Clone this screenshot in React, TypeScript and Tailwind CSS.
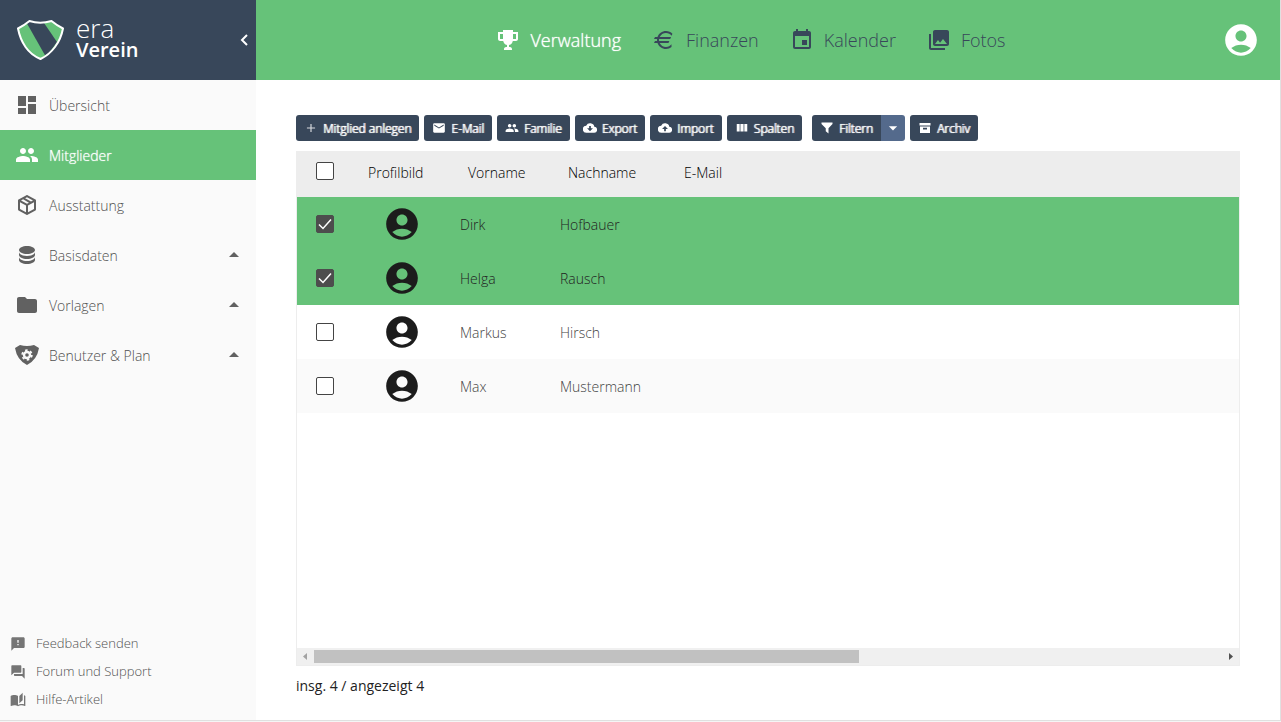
import { useState } from "react";
import type { ReactNode } from "react";
import {
  MdAccountCircle,
  MdAdd,
  MdArrowDropDown,
  MdArrowDropUp,
  MdAutoStories,
  MdDashboard,
  MdEmail,
  MdEvent,
  MdFeedback,
  MdFolder,
  MdForum,
  MdPeople,
  MdPhotoLibrary,
} from "react-icons/md";

function Glyph({ d, className }: { d: string; className: string }) {
  return (
    <svg viewBox="0 0 24 24" fill="currentColor" fillRule="evenodd" className={className} aria-hidden="true">
      <path d={d} />
    </svg>
  );
}

const TROPHY =
  "M20.2,4H20H17V2H7V4H4.5H3.8H2V11C2,12 3,13 4,13H7.2C7.6,14.9 8.6,16.6 11,16.9V19C8,19.2 8,20.3 8,21.6V22H16V21.7C16,20.4 16,19.3 13,19.1V17C15.5,16.7 16.5,15 16.8,13.1H20C21,13.1 22,12.1 22,11.1V4H20.2M4,11V6H7V8V11C5.6,11 4.4,11 4,11M20,11C19.6,11 18.4,11 17,11V6H18H20V11Z";
const EURO =
  "M7.07,11L7,12L7.07,13H17.35L16.5,15H7.67C8.8,17.36 11.21,19 14,19C16.23,19 18.22,17.96 19.5,16.33V19.12C18,20.3 16.07,21 14,21C10.08,21 6.75,18.5 5.5,15H2L3,13H5.05L5,12L5.05,11H2L3,9H5.5C6.75,5.5 10.08,3 14,3C16.5,3 18.8,4.04 20.43,5.71L19.57,7.75C18.29,6.08 16.27,5 14,5C11.21,5 8.8,6.64 7.67,9H19.04L18.19,11H7.07Z";
const DATABASE =
  "M12,3C7.58,3 4,4.79 4,7C4,9.21 7.58,11 12,11C16.42,11 20,9.21 20,7C20,4.79 16.42,3 12,3M4,9V12C4,14.21 7.58,16 12,16C16.42,16 20,14.21 20,12V9C20,11.21 16.42,13 12,13C7.58,13 4,11.21 4,9M4,14V17C4,19.21 7.58,21 12,21C16.42,21 20,19.21 20,17V14C20,16.21 16.42,18 12,18C7.58,18 4,16.21 4,14Z";
const PACKAGE =
  "M21,16.5C21,16.88 20.79,17.21 20.47,17.38L12.57,21.82C12.41,21.94 12.21,22 12,22C11.79,22 11.59,21.94 11.43,21.82L3.53,17.38C3.21,17.21 3,16.88 3,16.5V7.5C3,7.12 3.21,6.79 3.53,6.62L11.43,2.18C11.59,2.06 11.79,2 12,2C12.21,2 12.41,2.06 12.57,2.18L20.47,6.62C20.79,6.79 21,7.12 21,7.5V16.5M12,4.15L10.11,5.22L16,8.61L17.96,7.5L12,4.15M6.04,7.5L12,10.85L13.96,9.75L8.08,6.35L6.04,7.5M5,15.91L11,19.29V12.58L5,9.21V15.91M19,15.91V9.21L13,12.58V19.29L19,15.91Z";
const CLOUD = "M19.4 10A7.5 7.5 0 0 0 5.4 8 6 6 0 0 0 6 20H19a5 5 0 0 0 .4-10Z";
const CLOUD_DOWN = CLOUD + "M10.5 8.5H13.5V12.5H17L12 17.5 7 12.5H10.5Z";
const CLOUD_UP = CLOUD + "M10.5 17.5H13.5V13.5H17L12 8.500 7 13.5H10.5Z";
const COLUMNS = "M3 5H8V18H3ZM9.3 5H14.7V18H9.3ZM16 5H21V18H16Z";
const FUNNEL = "M1 1H23V4L15 12.5V23L9.5 18.5V12.5L1 4Z";
const ARCHIVE = "M1 2H23V7H1ZM2 9H22V22H2ZM8 11.5V15H16V11.5Z";

function Logo() {
  return (
    <svg viewBox="0 0 48 44" className="h-11 w-12" aria-hidden="true">
      <defs>
        <clipPath id="shield">
          <path d="M2 10 14 3Q24 7 34 3L47 10Q44 30 24 41 5 31 2 10Z" />
        </clipPath>
      </defs>
      <g clipPath="url(#shield)">
        <path d="M0 0H48V44H0Z" fill="#66c279" />
        <path d="M9 2H26L41 24 30 39Z" fill="#38475a" />
      </g>
      <path
        d="M2 10.500Q8 7.500 13.500 3Q24 6.500 35.500 3 41 7.500 47 10.500Q45 21 39 29T24.500 41Q15 37 9.500 29T2 10.500Z"
        fill="none"
        stroke="#fff"
        strokeWidth="2"
        strokeLinejoin="round"
      />
    </svg>
  );
}

function ShieldGear() {
  return (
    <svg viewBox="0 0 24 24" className="size-6" aria-hidden="true">
      <path d="M0 5 5 2Q12 4 19 2L24 5Q22 17 12 22 2 17 0 5Z" fill="#616161" />
      <circle cx="12" cy="12" r="3" fill="none" stroke="#fafafa" strokeWidth="2.400" />
      <circle cx="12" cy="12" r="4.800" fill="none" stroke="#fafafa" strokeWidth="1.800" strokeDasharray="2.500 2.526" />
    </svg>
  );
}

const topNav: { label: string; icon: ReactNode; active?: boolean }[] = [
  { label: "Verwaltung", icon: <Glyph d={TROPHY} className="size-6" />, active: true },
  { label: "Finanzen", icon: <Glyph d={EURO} className="size-6" /> },
  { label: "Kalender", icon: <MdEvent className="size-6" /> },
  { label: "Fotos", icon: <MdPhotoLibrary className="size-6" /> },
];

const sideNav: { label: string; icon: ReactNode; active?: boolean; group?: boolean }[] = [
  { label: "Übersicht", icon: <MdDashboard className="size-6" /> },
  { label: "Mitglieder", icon: <MdPeople className="size-6" />, active: true },
  { label: "Ausstattung", icon: <Glyph d={PACKAGE} className="size-6" /> },
  { label: "Basisdaten", icon: <Glyph d={DATABASE} className="size-6" />, group: true },
  { label: "Vorlagen", icon: <MdFolder className="size-6" />, group: true },
  { label: "Benutzer & Plan", icon: <ShieldGear />, group: true },
];

const helpNav = [
  { label: "Feedback senden", icon: <MdFeedback className="size-4" /> },
  { label: "Forum und Support", icon: <MdForum className="size-4" /> },
  { label: "Hilfe-Artikel", icon: <MdAutoStories className="size-4" /> },
];

const initialMembers = [
  { first: "Dirk", last: "Hofbauer", selected: true },
  { first: "Helga", last: "Rausch", selected: true },
  { first: "Markus", last: "Hirsch", selected: false },
  { first: "Max", last: "Mustermann", selected: false },
];

function ToolButton({ icon, label, joined }: { icon: ReactNode; label: string; joined?: boolean }) {
  return (
    <button
      type="button"
      className={
        "flex h-[26px] items-center gap-[5px] bg-[#38475a] px-2 text-xs font-light text-white " +
        (joined ? "rounded-l-[3px]" : "rounded-[3px]")
      }
    >
      {icon}
      <span className="pt-0.5 whitespace-nowrap [text-shadow:1px_0_0_#fff,0_0_1px_#fff]">{label}</span>
    </button>
  );
}

function Check({ checked, onChange, label }: { checked: boolean; onChange: () => void; label: string }) {
  return (
    <label className="mx-auto grid size-[18px] place-items-center">
      <input
        type="checkbox"
        aria-label={label}
        checked={checked}
        onChange={onChange}
        className="col-start-1 row-start-1 size-[18px] appearance-none rounded-xs border border-[#444] bg-white checked:border-[#4d4d4d] checked:bg-[#4d4d4d]"
      />
      {checked && (
        <svg viewBox="0 0 18 18" className="pointer-events-none col-start-1 row-start-1 size-[18px]" aria-hidden="true">
          <path d="M3 9.500 7 13.500 15 4.500" fill="none" stroke="#fff" strokeWidth="1.500" />
        </svg>
      )}
    </label>
  );
}

export default function App() {
  const [members, setMembers] = useState(initialMembers);
  const all = members.every((m) => m.selected);
  const toggle = (index: number) =>
    setMembers(members.map((m, i) => (i === index ? { ...m, selected: !m.selected } : m)));

  return (
    <div className="flex min-h-screen flex-col bg-[#f5f5f5] pb-px font-['Open_Sans',sans-serif]">
      <div className="flex grow border-r border-b border-[#e0e0e0] bg-white">
        <aside className="flex w-64 shrink-0 flex-col bg-[#fafafa]">
          <div className="flex h-20 items-center bg-[#38475a] pr-1 pl-4 text-white">
            <Logo />
            <div className="grow pb-1 pl-3">
              <div className="text-[26px] leading-6 font-light">era</div>
              <div className="text-xl leading-5 font-semibold">Verein</div>
            </div>
            <button type="button" aria-label="Menü einklappen" className="p-1">
              <svg viewBox="0 0 8 14" className="h-3.5 w-2" aria-hidden="true">
                <path d="M7 2 2 7 7 12" fill="none" stroke="#fff" strokeWidth="2" />
              </svg>
            </button>
          </div>
          <nav className="flex flex-col text-sm font-light text-[#505050]">
            {sideNav.map((item) => (
              <a
                key={item.label}
                href="#"
                className={
                  "flex h-[50px] items-center gap-2.5 pr-2.5 pl-[15px] " +
                  (item.active ? "bg-[#66c279] text-white [text-shadow:0_0_1px_#fff]" : "")
                }
              >
                <span className={item.active ? "text-white" : "text-[#616161]"}>{item.icon}</span>
                <span className="grow pt-0.5">{item.label}</span>
                {item.group && <MdArrowDropUp className="size-6 text-[#616161]" />}
              </a>
            ))}
          </nav>
          <nav className="mt-auto flex flex-col pb-1.5 text-[13px] font-light text-[#505050]">
            {helpNav.map((item) => (
              <a key={item.label} href="#" className="flex h-7 items-center gap-2.5 pl-2.5">
                <span className="text-[#757575]">{item.icon}</span>
                {item.label}
              </a>
            ))}
          </nav>
        </aside>

        <div className="flex min-w-0 grow flex-col">
          <header className="flex h-20 items-center bg-[#66c279] pr-5">
            <nav className="flex grow justify-center gap-[31px] pl-6 text-lg font-light">
              {topNav.map((item) => (
                <a
                  key={item.label}
                  href="#"
                  className={
                    "flex items-center gap-2.5 " +
                    (item.active ? "text-white [text-shadow:0_0_1px_#fff]" : "text-[#38475a]")
                  }
                >
                  {item.icon}
                  {item.label}
                </a>
              ))}
            </nav>
            <button type="button" aria-label="Profil" className="text-white">
              <MdAccountCircle className="size-[38px]" />
            </button>
          </header>

          <main className="flex grow flex-col px-10 pt-[35px]">
            <div className="flex gap-[5px]">
              <ToolButton icon={<MdAdd className="size-3.5 opacity-80" />} label="Mitglied anlegen" />
              <ToolButton icon={<MdEmail className="size-3.5" />} label="E-Mail" />
              <ToolButton icon={<MdPeople className="size-3.5" />} label="Familie" />
              <ToolButton icon={<Glyph d={CLOUD_DOWN} className="size-3.5" />} label="Export" />
              <ToolButton icon={<Glyph d={CLOUD_UP} className="size-3.5" />} label="Import" />
              <ToolButton icon={<Glyph d={COLUMNS} className="size-3.5" />} label="Spalten" />
              <div className="ml-[5px] flex">
                <ToolButton icon={<Glyph d={FUNNEL} className="mx-px size-3" />} label="Filtern" joined />
                <button
                  type="button"
                  aria-label="Filteroptionen"
                  className="flex w-6 items-center justify-center rounded-r-[3px] bg-[#546a8c] text-white"
                >
                  <MdArrowDropDown className="size-5" />
                </button>
              </div>
              <ToolButton icon={<Glyph d={ARCHIVE} className="mx-px size-3" />} label="Archiv" />
            </div>

            <div className="mt-2.5 flex grow flex-col border border-[#ededed]">
              <div className="grow">
                <table className="w-full table-fixed text-left text-sm text-[#222]">
                  <colgroup>
                    <col className="w-[55px]" />
                    <col className="w-[100px]" />
                    <col className="w-[100px]" />
                    <col className="w-[116px]" />
                    <col />
                  </colgroup>
                  <thead className="bg-[#ededed] text-black">
                    <tr className="h-[45px]">
                      <th className="pb-2">
                        <Check
                          checked={all}
                          onChange={() => setMembers(members.map((m) => ({ ...m, selected: !all })))}
                          label="Alle auswählen"
                        />
                      </th>
                      <th className="px-4 pb-1 font-light">Profilbild</th>
                      <th className="px-4 pb-1 font-light">Vorname</th>
                      <th className="px-4 pb-1 font-light">Nachname</th>
                      <th className="px-4 pb-1 font-light">E-Mail</th>
                    </tr>
                  </thead>
                  <tbody className="font-light">
                    {members.map((m, i) => (
                      <tr
                        key={m.last}
                        className={
                          "h-[54px] " +
                          (m.selected ? "bg-[#66c279]" : i % 2 ? "bg-[#fafafa] text-[#444]" : "bg-white text-[#444]")
                        }
                      >
                        <td>
                          <Check checked={m.selected} onChange={() => toggle(i)} label={m.first + " " + m.last} />
                        </td>
                        <td>
                          <MdAccountCircle className="mx-auto size-[38px] text-[#1c1c1c]" />
                        </td>
                        <td className="px-2 pt-0.5">{m.first}</td>
                        <td className="px-2 pt-0.5">{m.last}</td>
                        <td />
                      </tr>
                    ))}
                  </tbody>
                </table>
              </div>
              <div className="flex h-[17px] items-center bg-[#f0f0f0]">
                <svg viewBox="0 0 17 17" className="size-[17px] shrink-0" aria-hidden="true">
                  <path d="M10 5V12L6 8.500Z" fill="#a3a3a3" />
                </svg>
                <div className="h-full grow py-0.5">
                  <div className="h-full w-3/5 bg-[#c1c1c1]" />
                </div>
                <svg viewBox="0 0 17 17" className="size-[17px] shrink-0" aria-hidden="true">
                  <path d="M7 5V12L11 8.500Z" fill="#505050" />
                </svg>
              </div>
            </div>
            <p className="pt-2.5 pb-6 text-sm text-[#222]">insg. 4 / angezeigt 4</p>
          </main>
        </div>
      </div>
    </div>
  );
}
